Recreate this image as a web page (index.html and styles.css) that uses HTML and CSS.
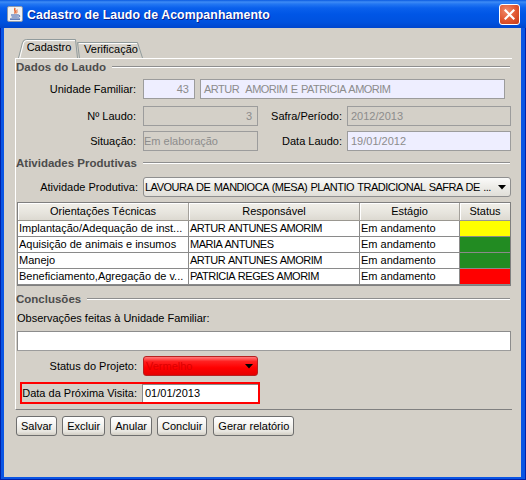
FILE: index.html
```html
<!DOCTYPE html>
<html>
<head>
<meta charset="utf-8">
<link rel="stylesheet" href="styles.css">
</head>
<body>
<div class="window">
  <div class="titlebar">
    <svg class="app-icon" width="16" height="16" viewBox="0 0 16 16">
      <rect x="0.5" y="0.5" width="15" height="15" rx="1.5" fill="#F2F2F2" stroke="#8E9AAE"/>
      <path d="M8.2 2 C6.2 3.8 9.8 5 7.6 7.6" fill="none" stroke="#E2571C" stroke-width="1.4"/>
      <path d="M10.2 3.6 C9.2 5 10.8 5.6 9.4 7.4" fill="none" stroke="#E2571C" stroke-width="1"/>
      <path d="M4 9 H11 M4.6 11 H10.4 M3 13.2 H13" stroke="#3559A8" stroke-width="1.2"/>
      <path d="M11 9 C13.6 9 13.4 11.6 10.4 11" fill="none" stroke="#3559A8" stroke-width="1"/>
    </svg>
    <span class="title">Cadastro de Laudo de Acompanhamento</span>
    <div class="close-btn">
      <svg width="11" height="11" viewBox="0 0 11 11"><path d="M1.5 1.5 L9.5 9.5 M9.5 1.5 L1.5 9.5" stroke="#fff" stroke-width="2.2" stroke-linecap="square"/></svg>
    </div>
  </div>

  <div class="client">
    <div class="tabbed">
      <div class="tabstrip">
        <div class="tab tab-selected">Cadastro</div>
        <div class="tab tab-plain">Verificação</div>
      </div>

      <div class="tabpanel">
        <div class="group-title first"><span>Dados do Laudo</span><i class="rule"></i></div>

        <div class="row r1">
          <label class="lbl lbl-main">Unidade Familiar:</label>
          <div class="field lav num w52">43</div>
          <div class="field lav caps w305 gap5">ARTUR&nbsp; AMORIM E PATRICIA AMORIM</div>
        </div>
        <div class="row r2">
          <label class="lbl lbl-main">Nº Laudo:</label>
          <div class="field dim num w115">3</div>
          <label class="lbl lbl-right">Safra/Período:</label>
          <div class="field dim w164">2012/2013</div>
        </div>
        <div class="row r3">
          <label class="lbl lbl-main">Situação:</label>
          <div class="field dim tight w115">Em elaboração</div>
          <label class="lbl lbl-right">Data Laudo:</label>
          <div class="field lav w164">19/01/2012</div>
        </div>

        <div class="group-title g2"><span>Atividades Produtivas</span><i class="rule"></i></div>

        <div class="row r4">
          <label class="lbl lbl-ativ">Atividade Produtiva:</label>
          <div class="combo w368">
            <span class="combo-text caps">LAVOURA DE MANDIOCA (MESA) PLANTIO TRADICIONAL SAFRA DE ...</span>
            <svg class="arrow" width="8" height="5" viewBox="0 0 8 5"><path d="M0 0 H8 L4 4.5 Z" fill="#000"/></svg>
          </div>
        </div>

        <div class="grid-wrap">
          <table class="grid">
            <colgroup><col class="c1"><col class="c2"><col class="c3"><col class="c4"></colgroup>
            <thead>
              <tr><th>Orientações Técnicas</th><th>Responsável</th><th>Estágio</th><th class="last">Status</th></tr>
            </thead>
            <tbody>
              <tr><td>Implantação/Adequação de inst...</td><td class="caps">ARTUR ANTUNES AMORIM</td><td>Em andamento</td><td class="last st-yellow"></td></tr>
              <tr><td>Aquisição de animais e insumos</td><td class="caps">MARIA ANTUNES</td><td>Em andamento</td><td class="last st-green"></td></tr>
              <tr><td>Manejo</td><td class="caps">ARTUR ANTUNES AMORIM</td><td>Em andamento</td><td class="last st-green"></td></tr>
              <tr><td>Beneficiamento,Agregação de v...</td><td class="caps">PATRICIA REGES AMORIM</td><td>Em andamento</td><td class="last st-red"></td></tr>
            </tbody>
          </table>
        </div>

        <div class="group-title g3"><span>Conclusões</span><i class="rule"></i></div>

        <div class="obs-label">Observações feitas à Unidade Familiar:</div>
        <div class="textarea"></div>

        <div class="row r5">
          <label class="lbl lbl-status">Status do Projeto:</label>
          <div class="combo combo-red w115">
            <span class="combo-text">Vermelho</span>
            <svg class="arrow" width="8" height="5" viewBox="0 0 8 5"><path d="M0 0 H8 L4 4.5 Z" fill="#000"/></svg>
          </div>
        </div>

        <div class="highlight">
          <label class="lbl lbl-visit">Data da Próxima Visita:</label>
          <div class="field white">01/01/2013</div>
        </div>
      </div>
    </div>

    <div class="buttons">
      <button class="btn">Salvar</button>
      <button class="btn">Excluir</button>
      <button class="btn">Anular</button>
      <button class="btn">Concluir</button>
      <button class="btn btn-last">Gerar relatório</button>
    </div>
  </div>
</div>
</body>
</html>
```

FILE: styles.css
```css
html, body {
  margin: 0;
  padding: 0;
}
body {
  width: 526px;
  height: 480px;
  overflow: hidden;
  font-family: "Liberation Sans", Arial, sans-serif;
  font-size: 11px;
  color: #000;
}

.window {
  width: 526px;
  height: 480px;
  box-sizing: border-box;
  display: flex;
  flex-direction: column;
  background: #0A55E4;
  box-shadow: inset 1px 0 0 #0021A8, inset -1px 0 0 #0021A8, inset 0 -1px 0 #0021A8;
}

/* ---------- title bar ---------- */
.titlebar {
  flex: none;
  height: 28px;
  display: flex;
  align-items: center;
  padding: 0 6px 0 7px;
  background: linear-gradient(to bottom, #0A5AE0 0px, #3E8CF5 2px, #2377F2 4px, #0A60EC 8px, #0056E6 14px, #0052DF 22px, #0046CD 28px);
}
.app-icon {
  flex: none;
  margin-top: -1px;
}
.title {
  flex: 1;
  margin-left: 4px;
  padding-top: 1px;
  color: #fff;
  font-weight: bold;
  font-size: 12.3px;
  letter-spacing: 0.1px;
  text-shadow: 1px 1px 0 #0A1F8C;
  white-space: nowrap;
}
.close-btn {
  flex: none;
  width: 21px;
  height: 21px;
  box-sizing: border-box;
  border: 1px solid #fff;
  border-radius: 3px;
  background: radial-gradient(circle at 35% 30%, #F08A6A 0%, #E0552F 55%, #C43A18 100%);
  display: flex;
  align-items: center;
  justify-content: center;
}

/* ---------- client ---------- */
.client {
  flex: 1;
  margin: 0 5px 3px 4px;
  background: #D4D0C8;
  padding-top: 11px;
}

.tabbed {
  margin-left: 11px;
  width: 497px;
}
.tabstrip {
  height: 19px;
  display: flex;
  align-items: flex-end;
  padding-left: 3px;
}
.tab {
  box-sizing: border-box;
  text-align: center;
  background-repeat: no-repeat;
  background-size: 100% 100%;
}
.tab-selected {
  width: 60px;
  height: 19px;
  line-height: 17px;
  padding-left: 2px;
  background-image: url("data:image/svg+xml,%3Csvg xmlns='http://www.w3.org/2000/svg' width='60' height='19'%3E%3Cpath d='M0.5 19 L4.5 3.5 Q5.3 0.5 8.5 0.5 L57.5 0.5 L59.5 19' fill='%23D4D0C8' stroke='%23919B9C'/%3E%3Cpath d='M1.8 19 L5.6 4 Q6.2 1.6 8.8 1.6 L57 1.6' fill='none' stroke='%23FFFFFF'/%3E%3C/svg%3E");
}
.tab-plain {
  width: 66px;
  height: 16px;
  line-height: 15px;
  margin-left: -1px;
  padding-left: 2px;
  background-image: url("data:image/svg+xml,%3Csvg xmlns='http://www.w3.org/2000/svg' width='66' height='16'%3E%3Cpath d='M0.5 0.5 L2.5 16 M0.5 0.5 L60.5 0.5 L65.5 16' fill='none' stroke='%23919B9C'/%3E%3Cpath d='M2 1.6 L60 1.6' fill='none' stroke='%23FFFFFF'/%3E%3C/svg%3E");
}

.tabpanel {
  border-top: 1px solid #fff;
  border-left: 1px solid #fff;
  border-bottom: 1px solid #808080;
  padding-bottom: 5px;
}

/* ---------- titled groups ---------- */
.group-title {
  height: 14px;
  display: flex;
  align-items: center;
  margin-right: 2px;
  font-weight: bold;
  font-size: 11.5px;
  color: #4C4C4C;
  white-space: nowrap;
}
.group-title.first { margin-top: 1px; }
.group-title.g2 { margin-top: 5px; }
.group-title.g3 { margin-top: 6px; }
.rule {
  flex: 1;
  margin-left: 6px;
  height: 0;
  border-top: 1px solid #8E8E8E;
  border-bottom: 1px solid #fff;
}

/* ---------- form rows ---------- */
.row {
  display: flex;
  align-items: center;
  height: 20px;
}
.r1 { margin-top: 5px; }
.r2 { margin-top: 7px; }
.r3 { margin-top: 5px; }
.r4 { margin-top: 7px; }
.r5 { margin-top: 5px; }

.lbl {
  flex: none;
  text-align: right;
  white-space: nowrap;
}
.lbl-main { width: 120px; margin-right: 7px; }
.lbl-right { width: 84px; margin-right: 5px; }
.lbl-ativ { width: 122px; margin-right: 5px; }
.lbl-status { width: 121px; margin-right: 6px; }

.field {
  flex: none;
  height: 20px;
  box-sizing: border-box;
  border: 1px solid #9C9C9C;
  line-height: 18px;
  padding: 0 3px;
  color: #8C8C8C;
  white-space: nowrap;
  overflow: hidden;
}
.field.lav { background: #EEEEFF; }
.field.dim { background: #D4D0C8; }
.field.num { text-align: right; padding-right: 5px; }
.field.tight { padding-left: 0; }
.field.gap5 { margin-left: 5px; }
.w52 { width: 52px; }
.w305 { width: 305px; }
.w115 { width: 115px; }
.w164 { width: 164px; }
.w368 { width: 368px; }

.caps { letter-spacing: -0.5px; word-spacing: 0.8px; }

/* ---------- combos ---------- */
.combo {
  flex: none;
  height: 20px;
  box-sizing: border-box;
  border: 1px solid #8F8F8F;
  border-radius: 3px;
  background: linear-gradient(to bottom, #FAFAF9 0%, #EEEDE9 45%, #E0DED8 100%);
  display: flex;
  align-items: center;
  padding-left: 1px;
}
.combo-text {
  flex: 1;
  white-space: nowrap;
  overflow: hidden;
}
.arrow {
  flex: none;
  margin-right: 4px;
}
.combo-red {
  border-color: #B72020;
  background: linear-gradient(to bottom, #FF7A7A 0%, #FF2020 25%, #FF0000 60%, #E60000 100%);
  color: #DD0000;
  padding-left: 2px;
}

/* ---------- table ---------- */
.grid-wrap {
  margin-top: 5px;
  margin-left: 1px;
  width: 494px;
  box-sizing: border-box;
  border: 1px solid #7F7F7F;
  background: #fff;
}
.grid {
  width: 492px;
  table-layout: fixed;
  border-collapse: separate;
  border-spacing: 0;
}
.c1 { width: 171px; }
.c2 { width: 171px; }
.c3 { width: 100px; }
.c4 { width: 50px; }
.grid th {
  height: 17px;
  padding: 0;
  line-height: 17px;
  font-weight: normal;
  text-align: center;
  background: linear-gradient(to bottom, #F1EFE9 0%, #E6E4DD 60%, #DCD9D1 100%);
  border-right: 1px solid #A3A09A;
  border-bottom: 1px solid #9A9790;
  box-shadow: inset 1px 1px 0 #fff;
  white-space: nowrap;
  overflow: hidden;
}
.grid td {
  height: 15px;
  padding: 0 0 0 1px;
  line-height: 15px;
  border-right: 1px solid #8A8A8A;
  border-bottom: 1px solid #8A8A8A;
  white-space: nowrap;
  overflow: hidden;
}
.grid .last { border-right: none; }
.st-yellow { background: #FFFF00; }
.st-green { background: #228B22; }
.st-red { background: #FF0000; }

/* ---------- conclusions ---------- */
.obs-label {
  margin-top: 5px;
  margin-left: 1px;
  height: 14px;
  line-height: 14px;
}
.textarea {
  margin-top: 6px;
  margin-left: 1px;
  width: 494px;
  height: 20px;
  box-sizing: border-box;
  background: #fff;
  border: 1px solid #8C8C8C;
  border-bottom-color: #9C9C9C;
}

.highlight {
  margin-top: 6px;
  margin-left: 4px;
  width: 240px;
  height: 22px;
  box-sizing: border-box;
  border: 2px solid #FF0000;
  display: flex;
  align-items: stretch;
}
.lbl-visit {
  width: 115px;
  margin-right: 5px;
  line-height: 18px;
}
.field.white {
  flex: 1;
  height: 18px;
  background: #fff;
  color: #000;
  border: none;
  border-top: 1px solid #8A8A8A;
  border-left: 1px solid #8A8A8A;
  line-height: 17px;
  padding-left: 2px;
}

/* ---------- buttons ---------- */
.buttons {
  margin-top: 6px;
  padding-left: 12px;
  display: flex;
  gap: 5px;
}
.btn {
  height: 20px;
  box-sizing: border-box;
  margin: 0;
  padding: 0 4px;
  border: 1px solid #6E6E6E;
  border-radius: 3px;
  background: linear-gradient(to bottom, #FFFFFF 0%, #F6F5F2 40%, #E7E5DF 80%, #D2CEC4 100%);
  font-family: "Liberation Sans", Arial, sans-serif;
  font-size: 11px;
  line-height: 18px;
  color: #000;
}
.btn-last { margin-left: 1px; }
```
